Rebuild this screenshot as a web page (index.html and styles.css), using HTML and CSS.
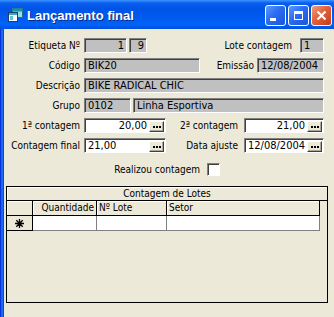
FILE: index.html
```html
<!DOCTYPE html>
<html lang="pt">
<head>
    <meta charset="UTF-8">
    <title>Lançamento final</title>
    <link rel="stylesheet" href="styles.css">
</head>
<body>
    <div class="window">
        <div class="titlebar">
            <svg class="app-icon" width="15" height="14" viewBox="0 0 15 14">
                <rect x="4.5" y="0.5" width="10" height="9" fill="#8fe0e8" stroke="#2a6f8a"/>
                <rect x="4.5" y="0.5" width="10" height="3" fill="#1b8fb0"/>
                <rect x="0.5" y="4.5" width="9" height="9" fill="#ffffff" stroke="#1d3c66"/>
                <rect x="1" y="5" width="8" height="2" fill="#3aa7c8"/>
                <rect x="2" y="8" width="3" height="4" fill="#5ec4d8"/>
            </svg>
            <span class="title">Lançamento final</span>
            <div class="tb-buttons">
                <div class="tb-btn"><span class="g-min"></span></div>
                <div class="tb-btn"><span class="g-max"></span></div>
                <div class="tb-btn close">
                    <svg width="11" height="11" viewBox="0 0 11 11">
                        <path d="M1.5 1.5 L9.5 9.5 M9.5 1.5 L1.5 9.5" stroke="#fff" stroke-width="2.2"/>
                    </svg>
                </div>
            </div>
        </div>
        <div class="client">
            <div class="frame-left"></div>
            <div class="content">
                <div class="form">
                    <div class="row">
                        <span class="lbl">Etiqueta Nº</span>
                        <div class="fld num w-etq">1</div>
                        <div class="fld num w-etq2">9</div>
                        <span class="lbl-r gap-lote">Lote contagem</span>
                        <div class="fld w-lote">1</div>
                    </div>
                    <div class="row">
                        <span class="lbl">Código</span>
                        <div class="fld w-cod">BIK20</div>
                        <span class="lbl-r gap-emis">Emissão</span>
                        <div class="fld w-emis">12/08/2004</div>
                    </div>
                    <div class="row">
                        <span class="lbl">Descrição</span>
                        <div class="fld grow">BIKE RADICAL CHIC</div>
                    </div>
                    <div class="row">
                        <span class="lbl">Grupo</span>
                        <div class="fld w-grp">0102</div>
                        <div class="fld grow w-grp2">Linha Esportiva</div>
                    </div>
                    <div class="row">
                        <span class="lbl">1ª contagem</span>
                        <div class="fld edit w-cont">
                            <span class="val num">20,00</span>
                            <span class="pick"><svg width="8" height="2"><rect x="0" width="2" height="2"/><rect x="3" width="2" height="2"/><rect x="6" width="2" height="2"/></svg></span>
                        </div>
                        <span class="lbl-r gap-cont">2ª contagem</span>
                        <div class="fld edit w-cont2">
                            <span class="val num">21,00</span>
                            <span class="pick"><svg width="8" height="2"><rect x="0" width="2" height="2"/><rect x="3" width="2" height="2"/><rect x="6" width="2" height="2"/></svg></span>
                        </div>
                    </div>
                    <div class="row">
                        <span class="lbl">Contagem final</span>
                        <div class="fld edit w-cont">
                            <span class="val">21,00</span>
                            <span class="pick"><svg width="8" height="2"><rect x="0" width="2" height="2"/><rect x="3" width="2" height="2"/><rect x="6" width="2" height="2"/></svg></span>
                        </div>
                        <span class="lbl-r gap-cont">Data ajuste</span>
                        <div class="fld edit w-cont2">
                            <span class="val">12/08/2004</span>
                            <span class="pick"><svg width="8" height="2"><rect x="0" width="2" height="2"/><rect x="3" width="2" height="2"/><rect x="6" width="2" height="2"/></svg></span>
                        </div>
                    </div>
                    <div class="row check-row">
                        <span class="lbl lbl-wide">Realizou contagem</span>
                        <span class="checkbox"></span>
                    </div>
                </div>

                <div class="grid">
                    <div class="grid-cap">Contagem de Lotes</div>
                    <div class="grid-row head">
                        <div class="cell c0"></div>
                        <div class="cell c1 num">Quantidade</div>
                        <div class="cell c2">Nº Lote</div>
                        <div class="cell c3">Setor</div>
                    </div>
                    <div class="grid-row data">
                        <div class="cell c0">
                            <svg width="9" height="9" viewBox="0 0 9 9">
                                <path d="M4.5 0 V9 M0 4.5 H9 M1.3 1.3 L7.7 7.7 M7.7 1.3 L1.3 7.7" stroke="#000" stroke-width="1.3"/>
                            </svg>
                        </div>
                        <div class="cell c1"></div>
                        <div class="cell c2"></div>
                        <div class="cell c3"></div>
                    </div>
                </div>
            </div>
        </div>
    </div>
</body>
</html>
```

FILE: styles.css
```css
body {
    margin: 0;
    font-family: "DejaVu Sans Condensed", "DejaVu Sans", sans-serif;
    font-size: 10px;
    color: #000;
    background: #ECE9D8;
}
.window {
    width: 334px;
    height: 317px;
    overflow: hidden;
    background: #ECE9D8;
}

/* title bar */
.titlebar {
    height: 29px;
    display: flex;
    align-items: center;
    padding: 0 2px 0 8px;
    background: linear-gradient(to bottom, #3d95ff 0, #0a5ef0 3px, #0054e6 8px, #0058ee 55%, #0062f8 85%, #0050dc 100%);
}
.app-icon {
    margin-right: 4px;
    margin-top: 1px;
}
.title {
    font-family: "Liberation Sans", Arial, sans-serif;
    font-weight: bold;
    font-size: 13px;
    color: white;
    text-shadow: 1px 1px 0 #0a2a8a;
    margin-top: 1px;
}
.tb-buttons {
    display: flex;
    margin-left: auto;
    gap: 2px;
    margin-top: 2px;
}
.tb-btn {
    width: 21px;
    height: 21px;
    box-sizing: border-box;
    border: 1px solid #fff;
    border-radius: 3px;
    background: linear-gradient(135deg, #5c9cff 0%, #2a6cf0 45%, #1c55d8 100%);
    display: flex;
    align-items: center;
    justify-content: center;
}
.tb-btn.close {
    background: linear-gradient(135deg, #f0a080 0%, #e2603a 45%, #c43c18 100%);
}
.g-min {
    width: 6px;
    height: 3px;
    background: #fff;
    margin: 8px 5px 0 0;
}
.g-max {
    width: 9px;
    height: 9px;
    box-sizing: border-box;
    border: 1px solid #fff;
    border-top-width: 3px;
}

/* client */
.client {
    display: flex;
    height: 288px;
}
.frame-left {
    width: 4px;
    background: linear-gradient(to right, #0831d9 0, #0831d9 1px, #166aee 1px, #166aee 3px, #0b4ad8 3px);
}
.content {
    flex: 1;
}
.form {
    display: flex;
    flex-direction: column;
    gap: 5px;
    padding: 9px 10px 0 0;
}
.row {
    display: flex;
    align-items: center;
    height: 15px;
}
.lbl {
    width: 76px;
    margin-right: 4px;
    text-align: right;
    white-space: nowrap;
}
.lbl-r {
    margin-left: auto;
    white-space: nowrap;
}
.gap-lote { margin-right: 8px; }
.gap-emis { margin-right: 3px; }
.gap-cont { margin-right: 6px; }

.fld {
    height: 15px;
    box-sizing: border-box;
    background: #c0c0c0;
    border: 1px solid;
    border-color: #808080 #fff #fff #808080;
    box-shadow: inset 1px 1px 0 #404040;
    padding: 1px 2px 0 3px;
    line-height: 12px;
    font-size: 11px;
    white-space: nowrap;
    overflow: hidden;
}
.num { text-align: right; }
.grow { flex: 1; }
.w-etq { width: 43px; }
.w-etq2 { width: 18px; margin-left: 2px; }
.w-lote { width: 24px; }
.w-cod { width: 116px; }
.w-emis { width: 67px; }
.w-grp { width: 47px; }
.w-grp2 { margin-left: 2px; }
.w-cont { width: 82px; }
.w-cont2 { width: 80px; }

.fld.edit {
    background: #fff;
    display: flex;
    align-items: center;
    padding: 1px 1px 0 3px;
}
.val {
    flex: 1;
}
.pick {
    width: 15px;
    height: 11px;
    box-sizing: border-box;
    margin-left: 2px;
    background: #ECE9D8;
    border: 1px solid;
    border-color: #fff #404040 #404040 #fff;
    box-shadow: inset -1px -1px 0 #aca899;
    display: flex;
    align-items: center;
    justify-content: center;
}
.pick svg {
    fill: #000;
    margin-top: 1px;
}

.check-row {
    height: 13px;
    margin-top: 5px;
}
.lbl-wide {
    width: 196px;
    margin-right: 7px;
}
.checkbox {
    width: 13px;
    height: 13px;
    box-sizing: border-box;
    background: #fff;
    border: 1px solid;
    border-color: #808080 #fff #fff #808080;
    box-shadow: inset 1px 1px 0 #404040;
}

/* subform grid */
.grid {
    width: 322px;
    height: 117px;
    box-sizing: border-box;
    border: 1px solid #000;
    margin: 10px 0 0 2px;
}
.grid-cap {
    height: 13px;
    line-height: 13px;
    text-align: center;
    border-bottom: 1px solid #000;
    box-shadow: inset 1px 1px 0 #fff;
}
.grid-row {
    display: flex;
    width: 313px;
}
.cell {
    height: 15px;
    box-sizing: border-box;
    line-height: 14px;
    padding: 0 2px;
    white-space: nowrap;
}
.head .cell {
    border-right: 1px solid #000;
    border-bottom: 1px solid #000;
    box-shadow: inset 1px 1px 0 #fff;
}
.data .cell {
    background: #fff;
    border-right: 1px solid #808080;
    border-bottom: 1px solid #808080;
}
.data .cell.c0 {
    background: #ECE9D8;
    border-right-color: #000;
    border-bottom-color: #000;
    display: flex;
    align-items: center;
    justify-content: center;
}
.c0 { width: 26px; }
.c1 { width: 64px; }
.c2 { width: 70px; }
.c3 { width: 153px; }
```
